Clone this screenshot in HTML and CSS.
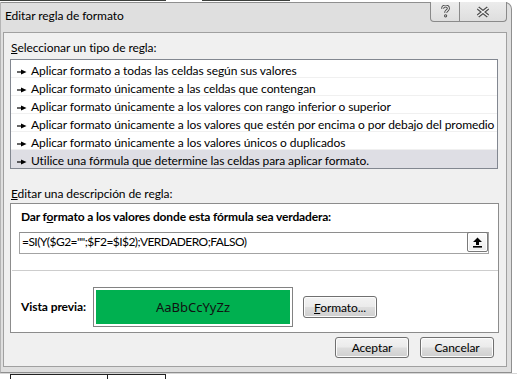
FILE: index.html
```html
<!DOCTYPE html>
<html lang="es">
<head>
    <meta charset="UTF-8">
    <title>Editar regla de formato</title>
    <link rel="stylesheet" href="styles.css">
</head>
<body>
    <div class="desk-top">
        <span class="seg seg-a"></span>
        <span class="seg seg-b"></span>
    </div>

    <div class="window">
        <div class="titlebar">
            <span class="title">Editar regla de formato</span>
            <div class="caption-btns">
                <button class="cap-btn cap-help">
                    <svg width="11" height="13" viewBox="0 0 11 13">
                        <path d="M2.6 3.8C2.6 1.9 3.9 1 5.5 1C7.2 1 8.4 2 8.4 3.5C8.4 5.4 5.6 5.6 5.6 7.8" fill="none" stroke="#4a4a4a" stroke-width="3"/>
                        <circle cx="5.6" cy="10.8" r="1.6" fill="#4a4a4a"/>
                        <path d="M2.6 3.8C2.6 1.9 3.9 1 5.5 1C7.2 1 8.4 2 8.4 3.5C8.4 5.4 5.6 5.6 5.6 7.8" fill="none" stroke="#f2f2f2" stroke-width="1.1"/>
                        <circle cx="5.6" cy="10.8" r="0.6" fill="#f2f2f2"/>
                    </svg>
                </button>
                <button class="cap-btn cap-close">
                    <svg width="16" height="12" viewBox="0 0 16 12">
                        <path d="M3 2L13 10M13 2L3 10" stroke="#4a4a4a" stroke-width="3.6"/>
                        <path d="M3 2L13 10M13 2L3 10" stroke="#f2f2f2" stroke-width="1.5"/>
                    </svg>
                </button>
            </div>
        </div>

        <div class="client">
            <div class="label"><u>S</u>eleccionar un tipo de regla:</div>
            <ul class="rule-list">
                <li><svg class="bullet" width="10" height="6" viewBox="0 0 10 6"><path d="M0 3H5" stroke="#000" stroke-width="1.2"/><path d="M4 0.5L9.5 3L4 5.5Z"/></svg>Aplicar formato a todas las celdas según sus valores</li>
                <li><svg class="bullet" width="10" height="6" viewBox="0 0 10 6"><path d="M0 3H5" stroke="#000" stroke-width="1.2"/><path d="M4 0.5L9.5 3L4 5.5Z"/></svg>Aplicar formato únicamente a las celdas que contengan</li>
                <li><svg class="bullet" width="10" height="6" viewBox="0 0 10 6"><path d="M0 3H5" stroke="#000" stroke-width="1.2"/><path d="M4 0.5L9.5 3L4 5.5Z"/></svg>Aplicar formato únicamente a los valores con rango inferior o superior</li>
                <li><svg class="bullet" width="10" height="6" viewBox="0 0 10 6"><path d="M0 3H5" stroke="#000" stroke-width="1.2"/><path d="M4 0.5L9.5 3L4 5.5Z"/></svg>Aplicar formato únicamente a los valores que estén por encima o por debajo del promedio</li>
                <li><svg class="bullet" width="10" height="6" viewBox="0 0 10 6"><path d="M0 3H5" stroke="#000" stroke-width="1.2"/><path d="M4 0.5L9.5 3L4 5.5Z"/></svg>Aplicar formato únicamente a los valores únicos o duplicados</li>
                <li class="selected"><svg class="bullet" width="10" height="6" viewBox="0 0 10 6"><path d="M0 3H5" stroke="#000" stroke-width="1.2"/><path d="M4 0.5L9.5 3L4 5.5Z"/></svg>Utilice una fórmula que determine las celdas para aplicar formato.</li>
            </ul>

            <div class="label label-desc"><u>E</u>ditar una descripción de regla:</div>
            <div class="panel">
                <div class="panel-title">Dar f<u>o</u>rmato a los valores donde esta fórmula sea verdadera:</div>
                <div class="formula">
                    <span class="formula-text">=SI(Y($G2="";$F2=$I$2);VERDADERO;FALSO)</span>
                    <button class="collapse-btn">
                        <svg width="11" height="11" viewBox="0 0 11 11">
                            <path d="M5.5 0.5L10 5H7V8H4V5H1Z" fill="#000"/>
                            <rect x="1" y="9" width="9" height="1.6" fill="#000"/>
                        </svg>
                    </button>
                </div>
                <div class="panel-sep"></div>
                <div class="preview-row">
                    <span class="preview-label">Vista previa:</span>
                    <div class="preview-box">
                        <div class="preview-sample">AaBbCcYyZz</div>
                    </div>
                    <button class="btn btn-format"><u>F</u>ormato...</button>
                </div>
            </div>

            <div class="actions">
                <button class="btn">Aceptar</button>
                <button class="btn">Cancelar</button>
            </div>
        </div>
    </div>

    <div class="desk-bottom">
        <span class="cell cell-a"></span>
        <span class="cell cell-b"></span>
    </div>
</body>
</html>
```

FILE: styles.css
```css
* {
    box-sizing: border-box;
}
body {
    margin: 0;
    width: 517px;
    height: 379px;
    overflow: hidden;
    background: #ffffff;
    font-family: Lato, "Segoe UI", sans-serif;
    font-size: 12px;
    letter-spacing: -0.08px;
    color: #000;
}
button {
    font-family: inherit;
    font-size: 12px;
    letter-spacing: inherit;
    color: #000;
    padding: 0;
    margin: 0;
}

/* bits of the sheet behind the dialog */
.desk-top {
    display: flex;
    height: 2px;
}
.desk-top .seg {
    height: 1px;
    background: #3c3f3c;
}
.seg-a {
    width: 166px;
}
.seg-b {
    width: 88px;
    margin-left: 36px;
}
.desk-bottom {
    display: flex;
    height: 6px;
    border-top: 1px solid #d6d6d6;
}
.desk-bottom .cell {
    height: 5px;
    border-top: 1px solid #222;
    border-left: 1px solid #222;
}
.cell-a {
    width: 97px;
    margin-left: 10px;
}
.cell-b {
    width: 59px;
    border-right: 1px solid #222;
}

/* dialog frame */
.window {
    width: 512px;
    height: 371px;
    border: 1px solid #8f8f8f;
    border-left-color: #b4b4b4;
    border-radius: 0 7px 0 0;
    background: #dfdfdf;
    display: flex;
    flex-direction: column;
}
.titlebar {
    height: 29px;
    display: flex;
    justify-content: space-between;
    align-items: flex-start;
}
.title {
    padding: 5px 0 0 4px;
    line-height: 16px;
}
.caption-btns {
    display: flex;
    margin: -1px 4px 0 0;
}
.cap-btn {
    height: 20px;
    border: 1px solid #8a8a8a;
    border-top: none;
    background: linear-gradient(#ececec, #dedede);
    display: flex;
    align-items: center;
    justify-content: center;
}
.cap-help {
    width: 30px;
    border-radius: 0 0 0 4px;
}
.cap-close {
    width: 47px;
    border-left: none;
    border-radius: 0 0 4px 0;
}

/* client area */
.client {
    margin: 0 4px 0 2px;
    height: 335px;
    border: 1px solid #a0a0a0;
    background: #f0f0f0;
    padding-top: 7px;
}
.label {
    margin-left: 7px;
    line-height: 16px;
}
.label-desc {
    margin-top: 17px;
}
.rule-list {
    list-style: none;
    margin: 3px 8px 0 6px;
    padding: 0;
    height: 110px;
    border: 1px solid #828790;
    background: #fff;
}
.rule-list li {
    height: 18px;
    padding: 4px 0 0 6px;
    line-height: 14px;
    border-bottom: 1px solid #f0f0f0;
    white-space: nowrap;
    display: flex;
    align-items: baseline;
}
.rule-list li:last-child {
    border-bottom: none;
}
.rule-list li.selected {
    background: #dedee4;
}
.bullet {
    flex: none;
    margin-right: 4px;
}

/* rule description */
.panel {
    margin: 1px 7px 0 6px;
    height: 130px;
    border: 1px solid #8c8c8c;
    background: #fff;
    padding-top: 5px;
}
.panel-title {
    padding-left: 10px;
    line-height: 16px;
    font-weight: bold;
    letter-spacing: -0.15px;
}
.formula {
    margin: 7px 9px 0 8px;
    height: 22px;
    border: 1px solid #a3a3a3;
    border-top-color: #8e8e8e;
    display: flex;
    justify-content: space-between;
}
.formula-text {
    padding-left: 2px;
    line-height: 18px;
    letter-spacing: -0.55px;
}
.collapse-btn {
    width: 21px;
    height: 20px;
    margin-top: -1px;
    border: 1px solid #7a7a7a;
    border-radius: 2px;
    background: linear-gradient(#fdfdfd, #ececec);
    box-shadow: inset 0 0 0 1px #ffffff;
    display: flex;
    align-items: center;
    justify-content: center;
}
.panel-sep {
    margin: 16px 0 0 1px;
    height: 1px;
    background: #cdcdcd;
}
.preview-row {
    margin-top: 16px;
    display: flex;
    align-items: center;
}
.preview-label {
    width: 82px;
    padding-left: 10px;
    font-weight: bold;
    line-height: 16px;
    white-space: nowrap;
}
.preview-box {
    width: 200px;
    height: 40px;
    border: 1px solid #828282;
    padding: 2px;
}
.preview-sample {
    height: 100%;
    background: #00b050;
    display: flex;
    align-items: center;
    justify-content: center;
    font-family: "Noto Sans", sans-serif;
    font-size: 13px;
    letter-spacing: 0;
    color: #111;
}

/* push buttons */
.btn {
    width: 74px;
    height: 21px;
    border: 1px solid #707070;
    border-radius: 3px;
    background: linear-gradient(#f3f3f3 0%, #ebebeb 48%, #dddddd 52%, #cfcfcf 100%);
    box-shadow: inset 0 0 0 1px #fcfcfc;
    line-height: 17px;
}
.btn-format {
    margin-left: 10px;
    height: 22px;
}
.actions {
    margin: 4px 12px 0 0;
    display: flex;
    justify-content: flex-end;
    gap: 11px;
}
```
